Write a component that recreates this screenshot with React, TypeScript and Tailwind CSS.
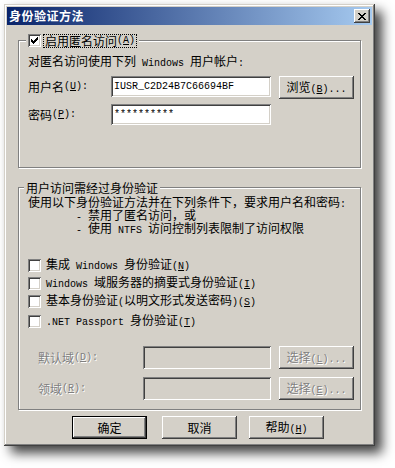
import React from "react";

const raised =
  "shadow-[inset_-1px_-1px_#404040,inset_1px_1px_#fff,inset_-2px_-2px_#808080,inset_2px_2px_#d4d0c8]";
const sunken =
  "shadow-[inset_1px_1px_#808080,inset_-1px_-1px_#fff,inset_2px_2px_#404040,inset_-2px_-2px_#d4d0c8]";
const groupBox =
  "border border-[#808080] shadow-[1px_1px_0_#fff,inset_1px_1px_0_#fff] flex flex-col pl-[9px]";
const disabledText = "text-[#808080] [text-shadow:1px_1px_0_#fff]";

// access key: "&A" -> underlined A
function Keys({ s }: { s: string }) {
  const bits = s.split(/&(.)/);
  return (
    <>
      {bits.map((b, i) =>
        i % 2 === 1 ? (
          <span key={i} className="underline underline-offset-1">
            {b}
          </span>
        ) : (
          b
        )
      )}
    </>
  );
}

// half-width runs in a mono face, like SimSun's 6px latin
function T({ s }: { s: string }) {
  const parts = s.split(/([\x20-\x7e]+)/).filter(Boolean);
  return (
    <>
      {parts.map((p, i) =>
        /^[\x20-\x7e]+$/.test(p) ? (
          <span key={i} className="font-['Liberation_Mono',monospace] text-[10px] whitespace-pre">
            <Keys s={p} />
          </span>
        ) : (
          <span key={i}>{p}</span>
        )
      )}
    </>
  );
}

function Pixels({ rows, w, h }: { rows: string[]; w: number; h: number }) {
  return (
    <svg width={w} height={h} viewBox={`0 0 ${w} ${h}`} shapeRendering="crispEdges">
      {rows.flatMap((r, y) =>
        r.split("").map((c, x) =>
          c === "x" ? <rect key={`${x}-${y}`} x={x} y={y} width={1} height={1} fill="#000" /> : null
        )
      )}
    </svg>
  );
}

const closeGlyph = ["xx....xx", ".xx..xx.", "..xxxx..", "...xx...", "..xxxx..", ".xx..xx.", "xx....xx"];
const checkGlyph = ["......x", ".....xx", "x...xxx", "xx.xxx.", "xxxxx..", ".xxx...", "..x...."];

function Checkbox({ checked = false }: { checked?: boolean }) {
  return (
    <div className={`w-[13px] h-[13px] shrink-0 bg-white flex items-center justify-center ${sunken}`}>
      {checked && <Pixels rows={checkGlyph} w={7} h={7} />}
    </div>
  );
}

function Button({
  label,
  w = "w-[75px]",
  disabled = false,
  isDefault = false,
}: {
  label: string;
  w?: string;
  disabled?: boolean;
  isDefault?: boolean;
}) {
  return (
    <div
      className={`${w} h-[23px] shrink-0 bg-[#d4d0c8] flex items-center justify-center ${raised} ${
        isDefault ? "border border-black" : ""
      } ${disabled ? disabledText : "text-black"}`}
    >
      <span className="pt-[1px]">
        <T s={label} />
      </span>
    </div>
  );
}

function CheckRow({ label, className }: { label: string; className: string }) {
  return (
    <div className={`flex items-center h-[13px] ${className}`}>
      <Checkbox />
      <span className="ml-[5px] whitespace-nowrap">
        <T s={label} />
      </span>
    </div>
  );
}

export default function App() {
  return (
    <div className="w-[395px] h-[468px] bg-white overflow-hidden font-['Noto_Sans_CJK_SC',sans-serif] text-[12px] leading-[12px] text-black">
      <div
        className={`ml-[4px] mt-[4px] w-[371px] h-[442px] bg-[#d4d0c8] p-[3px] flex flex-col shadow-[inset_-1px_-1px_#404040,inset_1px_1px_#d4d0c8,inset_-2px_-2px_#808080,inset_2px_2px_#fff,7px_7px_11px_rgba(0,0,0,0.75)]`}
      >
        {/* Title bar */}
        <div className="h-[18px] shrink-0 flex items-center justify-between pl-[2px] pr-[2px] bg-[linear-gradient(to_right,#0a246a,#a6caf0)]">
          <span className="text-white font-bold tracking-[0.5px]">身份验证方法</span>
          <div className={`w-[16px] h-[14px] bg-[#d4d0c8] flex items-center justify-center ${raised}`}>
            <Pixels rows={closeGlyph} w={8} h={7} />
          </div>
        </div>

        <div className="flex flex-col pl-[11px]">
          {/* Anonymous access */}
          <div className={`mt-[15px] h-[128px] w-[343px] ${groupBox}`}>
            <div className="-mt-[7px] -ml-[2px] self-start flex items-center h-[13px] bg-[#d4d0c8] px-[2px]">
              <Checkbox checked />
              <div className="ml-[2px] h-[14px] px-[1px] flex items-center border border-dotted border-black">
                <T s="启用匿名访问(&A)" />
              </div>
            </div>
            <div className="mt-[8px] h-[12px] whitespace-nowrap">
              <T s="对匿名访问使用下列 Windows 用户帐户:" />
            </div>
            <div className="mt-[9px] flex h-[23px]">
              <div className="w-[83px] h-[21px] flex items-center">
                <T s="用户名(&U):" />
              </div>
              <div className={`w-[160px] h-[21px] bg-white flex items-center pl-[3px] ${sunken}`}>
                <T s="IUSR_C2D24B7C66694BF" />
              </div>
              <div className="ml-[8px]">
                <Button label="浏览(&B)..." />
              </div>
            </div>
            <div className="mt-[5px] flex">
              <div className="w-[83px] h-[21px] flex items-center">
                <T s="密码(&P):" />
              </div>
              <div className={`w-[160px] h-[21px] bg-white flex items-center pl-[3px] ${sunken}`}>
                <T s="**********" />
              </div>
            </div>
          </div>

          {/* Authenticated access */}
          <div className={`mt-[19px] h-[223px] w-[343px] ${groupBox}`}>
            <div className="-mt-[7px] -ml-[4px] self-start flex items-center h-[13px] bg-[#d4d0c8] px-[2px]">
              用户访问需经过身份验证
            </div>
            <div className="mt-[1px] whitespace-nowrap leading-[13px]">
              <div className="h-[13px]">
                <T s="使用以下身份验证方法并在下列条件下，要求用户名和密码:" />
              </div>
              <div className="h-[13px] pl-[48px]">
                <T s="- 禁用了匿名访问，或" />
              </div>
              <div className="h-[13px] pl-[48px]">
                <T s="- 使用 NTFS 访问控制列表限制了访问权限" />
              </div>
            </div>

            <CheckRow className="mt-[25px]" label="集成 Windows 身份验证(&N)" />
            <CheckRow className="mt-[5px]" label="Windows 域服务器的摘要式身份验证(&I)" />
            <CheckRow className="mt-[5px]" label="基本身份验证(以明文形式发送密码)(&S)" />
            <CheckRow className="mt-[7px]" label=".NET Passport 身份验证(&T)" />

            <div className="mt-[18px] flex h-[23px]">
              <div className={`ml-[10px] w-[105px] flex items-center ${disabledText}`}>
                <T s="默认域(&D):" />
              </div>
              <div className={`w-[128px] h-[23px] bg-[#d4d0c8] ${sunken}`} />
              <div className="ml-[8px]">
                <Button label="选择(&L)..." disabled />
              </div>
            </div>
            <div className="mt-[8px] flex h-[23px]">
              <div className={`ml-[10px] w-[105px] flex items-center ${disabledText}`}>
                <T s="领域(&R):" />
              </div>
              <div className={`w-[128px] h-[23px] bg-[#d4d0c8] ${sunken}`} />
              <div className="ml-[8px]">
                <Button label="选择(&E)..." disabled />
              </div>
            </div>
          </div>

          {/* Dialog buttons */}
          <div className="mt-[6px] flex">
            <div className="ml-[54px]">
              <Button label="确定" isDefault />
            </div>
            <div className="ml-[15px]">
              <Button label="取消" />
            </div>
            <div className="ml-[12px]">
              <Button label="帮助(&H)" />
            </div>
          </div>
        </div>
      </div>
    </div>
  );
}
